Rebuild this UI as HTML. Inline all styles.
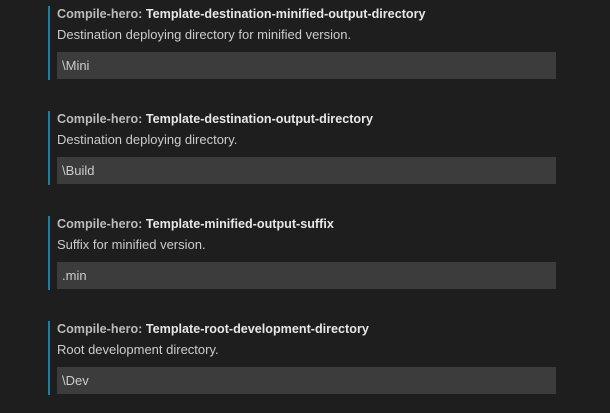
<!DOCTYPE html>
<html><head><style>
body{margin:0;background:#1e1e1e;width:610px;height:413px;overflow:hidden;font-family:"Liberation Sans",sans-serif;font-size:13px;color:#cccccc}
.g{position:absolute;left:48px;width:510px;height:74px}
.bar{position:absolute;left:0;top:0;width:2px;height:74px;background:#1a7fa6}
.t{position:absolute;left:9px;top:1px;white-space:nowrap;font-weight:bold;color:#e7e7e7;font-size:12.6px}
.t span{color:#bbbbbb}
.d{position:absolute;left:9px;top:21px;white-space:nowrap;color:#cccccc}
.i{position:absolute;left:9px;top:46px;width:499px;height:27px;background:#3c3c3c;color:#cccccc;line-height:28px;padding-left:5px;box-sizing:border-box}
</style></head><body>
<div class="g" style="top:6px"><div class="bar"></div><div class="t"><span>Compile-hero:</span> Template-destination-minified-output-directory</div><div class="d">Destination deploying directory for minified version.</div><div class="i">\Mini</div></div>
<div class="g" style="top:111px"><div class="bar"></div><div class="t"><span>Compile-hero:</span> Template-destination-output-directory</div><div class="d">Destination deploying directory.</div><div class="i">\Build</div></div>
<div class="g" style="top:216px"><div class="bar"></div><div class="t"><span>Compile-hero:</span> Template-minified-output-suffix</div><div class="d">Suffix for minified version.</div><div class="i">.min</div></div>
<div class="g" style="top:321px"><div class="bar"></div><div class="t"><span>Compile-hero:</span> Template-root-development-directory</div><div class="d">Root development directory.</div><div class="i">\Dev</div></div>
</body></html>
